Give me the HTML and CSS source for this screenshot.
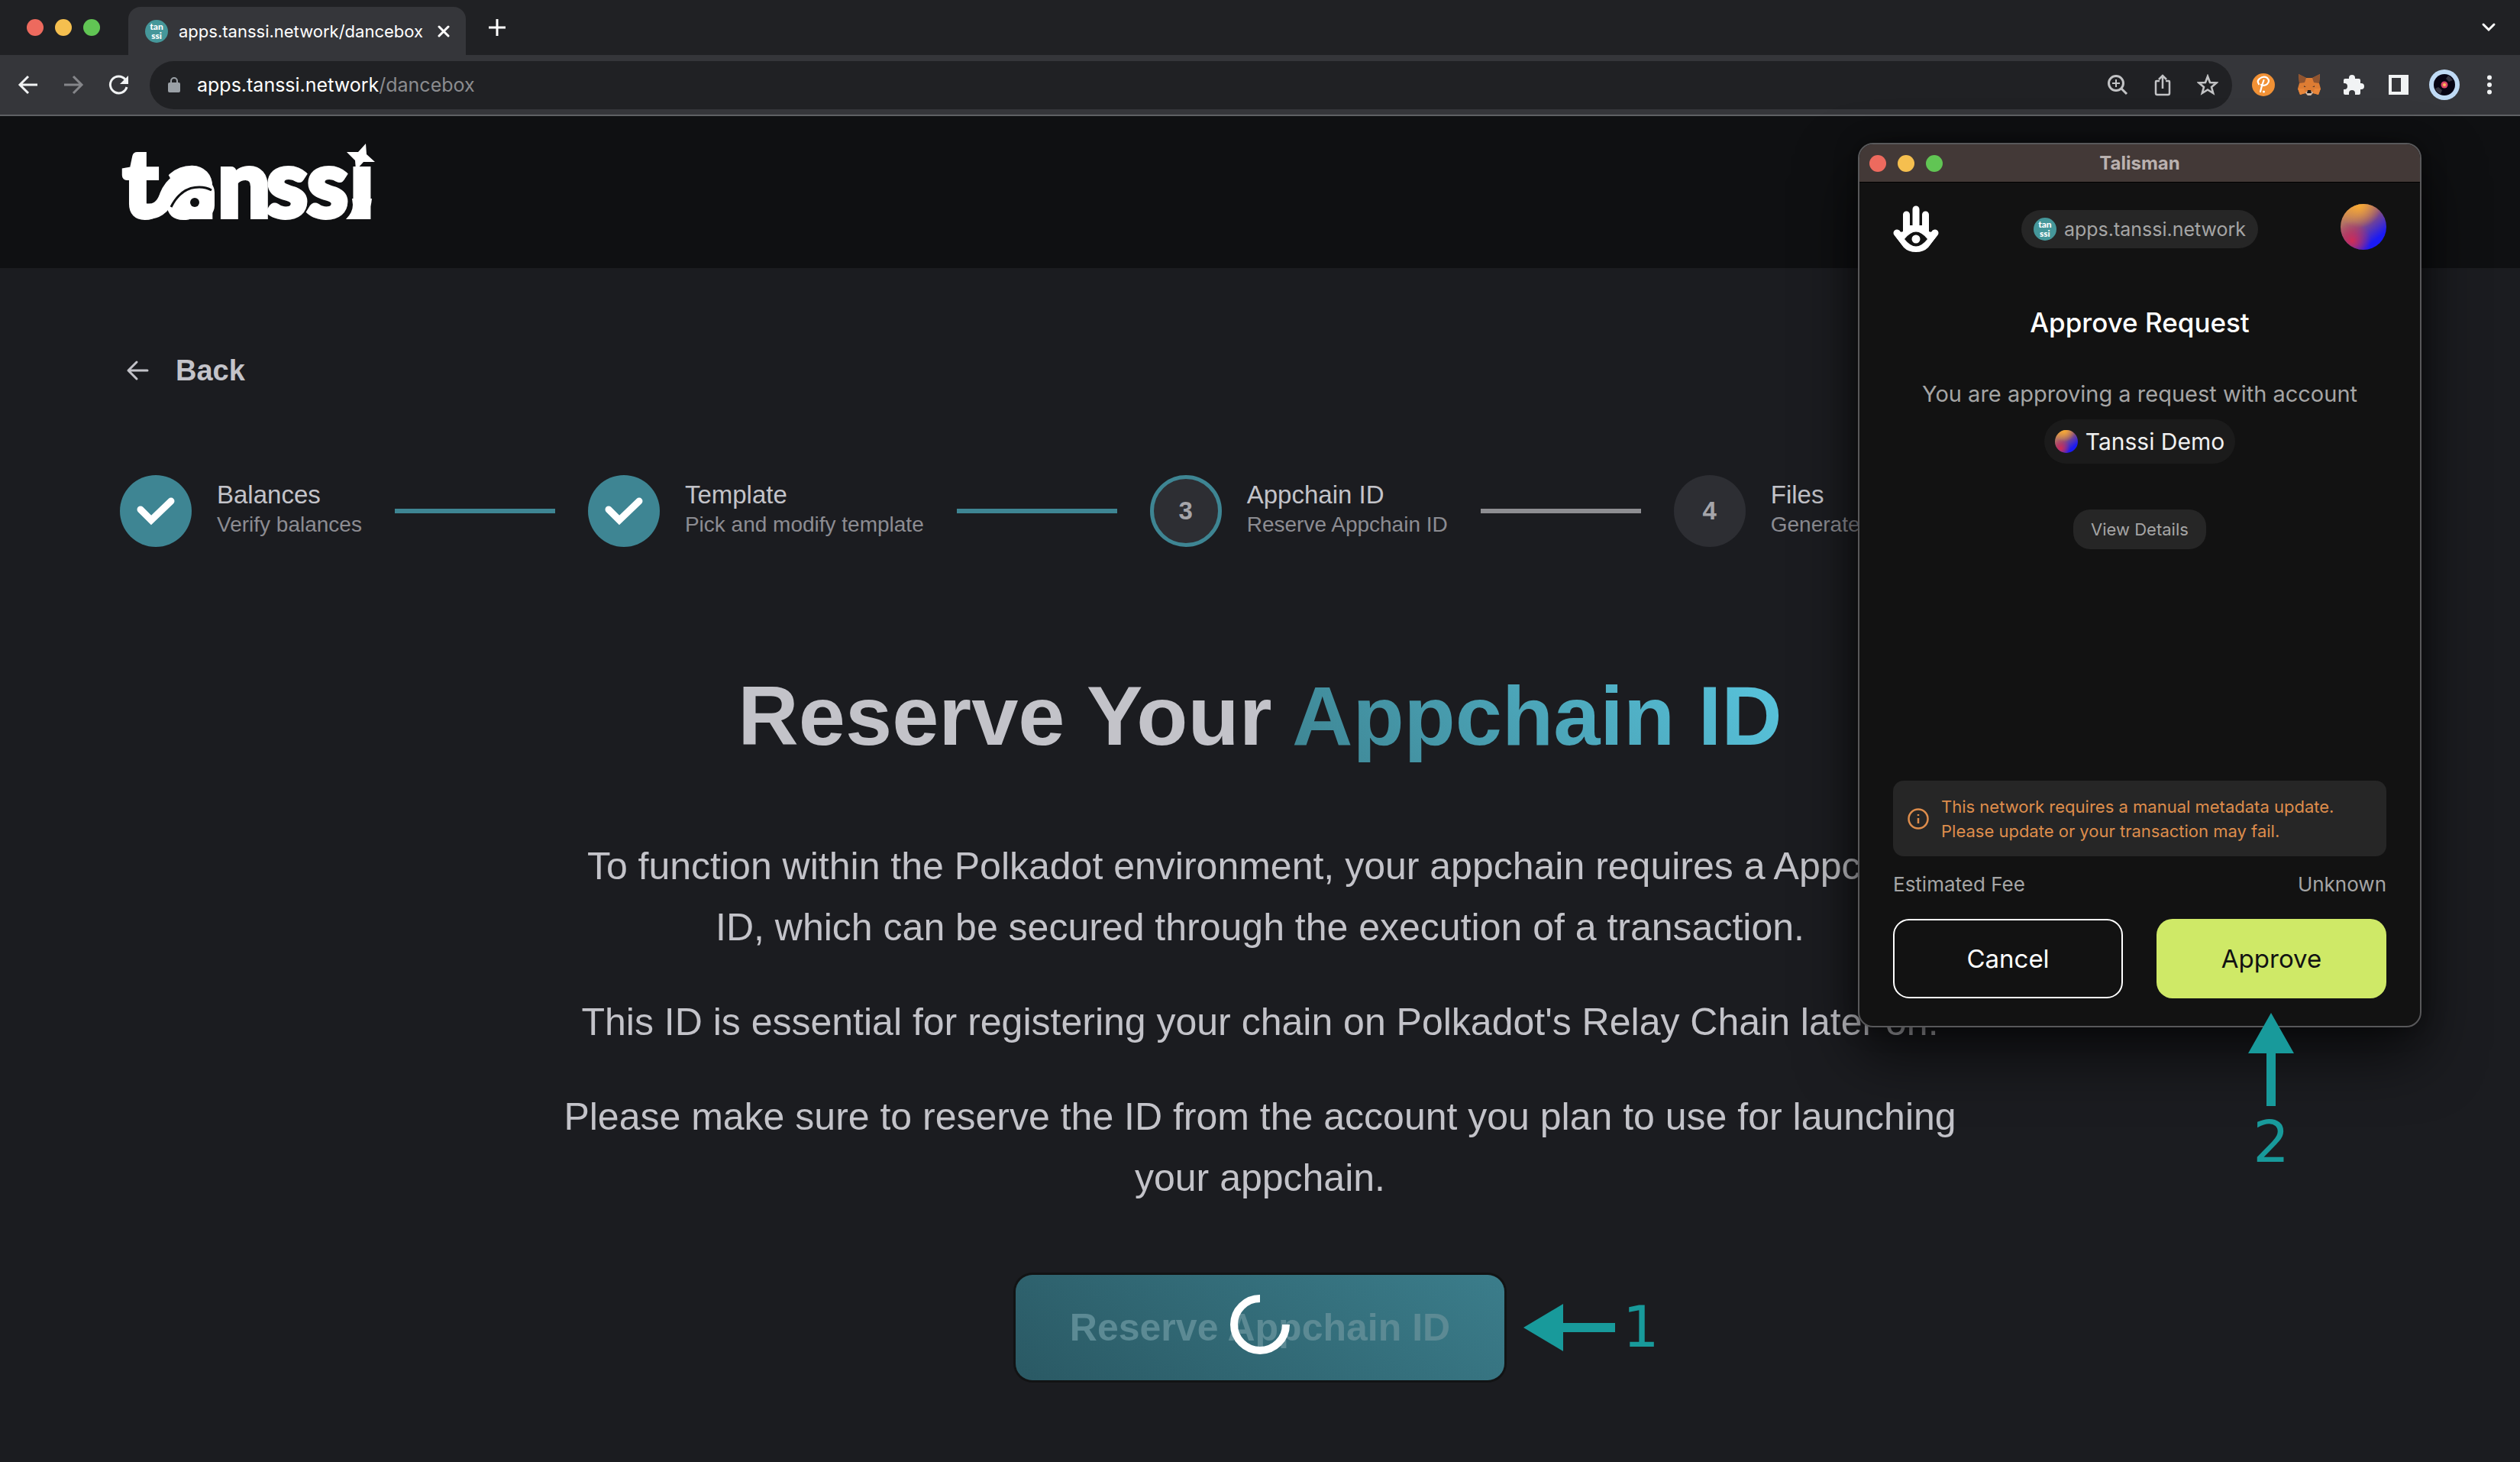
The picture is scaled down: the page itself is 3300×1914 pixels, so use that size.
FILE: index.html
```html
<!DOCTYPE html>
<html lang="en">
<head>
<meta charset="utf-8">
<title>apps.tanssi.network/dancebox</title>
<link rel="stylesheet" href="styles.css">
</head>
<body>
<svg class="defs" aria-hidden="true">
  <defs>
    <linearGradient id="orb-base" x1="0.1" y1="0" x2=".9" y2="1">
      <stop offset="0" stop-color="#e09a4a"/><stop offset=".45" stop-color="#8a4f7c"/><stop offset=".8" stop-color="#1a1af5"/>
    </linearGradient>
    <radialGradient id="orb-top" cx=".4" cy=".02" r=".5"><stop offset="0" stop-color="#f9ab33"/><stop offset="1" stop-color="#f9ab33" stop-opacity="0"/></radialGradient>
    <radialGradient id="orb-red" cx=".25" cy=".8" r=".42"><stop offset="0" stop-color="#cf2c56"/><stop offset="1" stop-color="#cf2c56" stop-opacity="0"/></radialGradient>
    <symbol id="orb" viewBox="0 0 60 60">
      <circle cx="30" cy="30" r="30" fill="url(#orb-base)"/><circle cx="30" cy="30" r="30" fill="url(#orb-top)"/><circle cx="30" cy="30" r="30" fill="url(#orb-red)"/>
    </symbol>
    <symbol id="check" viewBox="0 0 94 94"><path d="M27 45 41 59 67 34" fill="none" stroke="#fff" stroke-width="9" stroke-linecap="round" stroke-linejoin="miter"/></symbol>
  </defs>
</svg>

<header class="browser">
  <div class="tabs">
    <div class="lights"><i class="red"></i><i class="amber"></i><i class="green"></i></div>
    <div class="tab">
      <span class="favicon"><b>tan</b><b>ssi</b></span>
      <span class="tab-title">apps.tanssi.network/dancebox</span>
      <button class="bare" aria-label="Close tab"><svg width="16" height="16" viewBox="0 0 16 16"><path d="M2 2 14 14M14 2 2 14" stroke="#fff" stroke-width="3" stroke-linecap="round"/></svg></button>
    </div>
    <button class="bare new-tab" aria-label="New tab"><svg width="24" height="24" viewBox="0 0 24 24"><path d="M12 1V23M1 12H23" stroke="#fff" stroke-width="3"/></svg></button>
    <button class="bare tab-list" aria-label="Search tabs"><svg width="20" height="14" viewBox="0 0 20 14"><path d="M3 3 10 10 17 3" fill="none" stroke="#fff" stroke-width="3" stroke-linecap="round"/></svg></button>
  </div>
  <div class="toolbar">
    <div class="nav">
      <button class="bare" aria-label="Back"><svg width="28" height="28" viewBox="0 0 28 28"><path d="M26 14H4M14 3 3 14 14 25" fill="none" stroke="#f1f3f4" stroke-width="3"/></svg></button>
      <button class="bare" aria-label="Forward"><svg width="28" height="28" viewBox="0 0 28 28"><path d="M2 14H24M14 3 25 14 14 25" fill="none" stroke="#85868a" stroke-width="3"/></svg></button>
      <button class="bare" aria-label="Reload"><svg width="28" height="28" viewBox="0 0 28 28"><path d="M23 7A11 11 0 1 0 25 17" fill="none" stroke="#f1f3f4" stroke-width="3"/><path d="M27 2V13H16Z" fill="#f1f3f4"/></svg></button>
    </div>
    <div class="address">
      <svg width="16" height="22" viewBox="0 0 16 22"><path d="M4 9V6a4 4 0 0 1 8 0V9" fill="none" stroke="#9aa0a6" stroke-width="2"/><rect width="16" height="13" y="8" rx="2" fill="#9aa0a6"/></svg>
      <span class="url">apps.tanssi.network<span>/dancebox</span></span>
      <svg width="28" height="28" viewBox="0 0 28 28" fill="none" stroke="#c2c3c5" stroke-width="3"><circle cx="12" cy="12" r="9.500"/><path d="M19 19 26 26"/><path d="M12 7V17M7 12H17" stroke-width="2"/></svg>
      <svg width="28" height="30" viewBox="0 0 28 30" fill="none" stroke="#c2c3c5" stroke-width="2.500"><path d="M10 10H6Q5 10 5 11V26Q5 28 7 28H21Q23 28 23 26V11Q23 10 22 10H18M14 20V3M9 8 14 3 19 8"/></svg>
      <svg width="28" height="28" viewBox="0 0 28 28"><path d="M14 3 17 11 25.500 11.500 19 17 21.200 25 14 20.500 6.800 25 9 17 2.500 11.500 11 11Z" fill="none" stroke="#c2c3c5" stroke-width="2.600"/></svg>
    </div>
    <div class="extensions">
      <svg width="30" height="30" viewBox="0 0 30 30"><circle cx="15" cy="15" r="15" fill="#f19135"/><path d="M9 14Q6 10 10 7 15 3 20 6 24 10 20 14 17 17 12 15M15.500 9Q13 15 11 24" fill="none" stroke="#fff" stroke-width="2.200" stroke-linecap="round"/><circle cx="15.500" cy="24" r="1.500" fill="#fff"/></svg>
      <svg width="30" height="30" viewBox="0 0 30 30"><path d="M1 1 11 6H19L29 1 28 13 30 20 27 28 20 26 17 29H13L10 26 3 28 0 20 2 13Z" fill="#dd7c33"/><path d="M1 1 11 6 9 12 2 13ZM29 1 19 6 21 12 28 13Z" fill="#8f5430"/><path d="M0 20H8L10 26 3 28ZM30 20H22L20 26 27 28Z" fill="#e8863a"/><path d="M8 16 11 18 8 18ZM22 16 19 18 22 18Z" fill="#5b3d2c"/><path d="M10 25 13 23H17L20 25 17 29H13Z" fill="#cdbeb2"/><path d="M13 22H17L18 26H12Z" fill="#1c1a1c"/></svg>
      <svg width="28" height="28" viewBox="0 0 28 28"><path d="M2 6H7V5a4 4 0 0 1 8 0V6H20Q22 6 22 8V12H23a4 4 0 0 1 0 8H22V25Q22 27 20 27H15V25a4 4 0 0 0-8 0V27H2Q0 27 0 25V20H1a4 4 0 0 0 0-8H0V8Q0 6 2 6Z" fill="#f1f3f4"/></svg>
      <svg width="28" height="28" viewBox="0 0 28 28"><path fill-rule="evenodd" d="M1 1H27V27H1ZM5 5V23H17V5Z" fill="#f1f3f4"/></svg>
      <svg width="40" height="40" viewBox="0 0 40 40"><circle cx="20" cy="20" r="20" fill="#bfdaf5"/><circle cx="20" cy="20" r="14" fill="#060414"/><path d="M25 8A13 13 0 0 1 31 14L26 16 22 12ZM8 25A13 13 0 0 0 15 32L17 27 12 23Z" fill="#34333f"/><circle cx="20" cy="20" r="4.500" fill="#dc4468"/><circle cx="20" cy="20" r="2" fill="#f9bf55"/></svg>
      <svg width="8" height="28" viewBox="0 0 8 28" fill="#f1f3f4"><circle cx="4" cy="4.500" r="3"/><circle cx="4" cy="14" r="3"/><circle cx="4" cy="23.500" r="3"/></svg>
    </div>
  </div>
</header>

<div class="site-header">
  <svg class="logo" width="340" height="114" viewBox="0 0 340 114" role="img" aria-label="tanssi">
    <text x="4 62 128 192 245 301" y="96">tanssı</text>
    <rect x="67" y="46" width="57" height="53" rx="18" fill="#fff"/>
    <path d="M32 88Q54 92 62 68 72 43 104 43" fill="none" stroke="#fff" stroke-width="20"/>
    <path d="M67 83Q80 57 104 57 113 57 120 61" fill="none" stroke="#0f1012" stroke-width="3"/>
    <circle cx="98" cy="77" r="6" fill="#0f1012"/>
    <path d="M304 72H330Q328 99 304 99H296Q305 90 305 80Z" fill="#fff"/>
    <path d="M322 0 323 14 334 24 319 24 309 35 308 22 297 11 312 11Z" fill="#fff"/>
  </svg>
</div>

<main class="page">
  <a class="back" href="#"><svg width="30" height="28" viewBox="0 0 30 28"><path d="M28 14H3M14 3 3 14 14 25" fill="none" stroke="#c3c3c9" stroke-width="3" stroke-linecap="round" stroke-linejoin="round"/></svg>Back</a>

  <ol class="steps">
    <li class="done"><span class="disc"><svg width="94" height="94"><use href="#check"/></svg></span><span class="label">Balances<small>Verify balances</small></span></li>
    <li class="done"><span class="disc"><svg width="94" height="94"><use href="#check"/></svg></span><span class="label">Template<small>Pick and modify template</small></span></li>
    <li class="current"><span class="disc">3</span><span class="label">Appchain ID<small>Reserve Appchain ID</small></span></li>
    <li><span class="disc">4</span><span class="label">Files<small>Generate files</small></span></li>
  </ol>

  <section class="reserve">
    <h1>Reserve Your <em>Appchain ID</em></h1>
    <p>To function within the Polkadot environment, your appchain requires a Appchain ID, which can be secured through the execution of a transaction.</p>
    <p>This ID is essential for registering your chain on Polkadot's Relay Chain later on.</p>
    <p>Please make sure to reserve the ID from the account you plan to use for launching your appchain.</p>
    <div class="action">
      <button class="submit"><span>Reserve Appchain ID</span><svg class="spinner" width="78" height="78" viewBox="0 0 78 78"><path d="M39 5A34 34 0 1 0 73 39" fill="none" stroke="#fff" stroke-width="10"/></svg></button>
      <div class="mark mark-one"><svg width="120" height="62" viewBox="0 0 120 62"><path d="M0 31 52 0V25H120V37H52V62Z" fill="#189a9b"/></svg>1</div>
    </div>
  </section>
</main>

<aside class="wallet">
  <div class="titlebar"><div class="lights"><i class="red"></i><i class="amber"></i><i class="green"></i></div><strong>Talisman</strong></div>
  <div class="wallet-body">
    <div class="wallet-top">
      <svg width="60" height="62" viewBox="0 0 60 62"><g stroke="#fff" stroke-width="9" stroke-linecap="round"><path d="M17.500 12V36M30 5V34M42.500 12V36"/><path d="M5 36 17 51M55 36 43 51"/></g><path d="M13 26H47V34Q51 36 52 32L58 39 46 55Q40 61 30 61 20 61 14 55L2 39 8 32Q9 36 13 34Z" fill="#fff"/><path d="M15 44Q30 25 45 44 30 63 15 44Z" fill="#121212"/><circle cx="30" cy="44" r="5.500" fill="#fff"/></svg>
      <span class="site"><span class="favicon"><b>tan</b><b>ssi</b></span>apps.tanssi.network</span>
      <svg class="avatar" width="60" height="60"><use href="#orb"/></svg>
    </div>
    <h2>Approve Request</h2>
    <p class="lead">You are approving a request with account</p>
    <span class="account"><svg width="30" height="30"><use href="#orb"/></svg>Tanssi Demo</span>
    <button class="details">View Details</button>
    <div class="notice"><svg width="28" height="28" viewBox="0 0 28 28" fill="none" stroke="#de8d4c" stroke-width="2.500"><circle cx="14" cy="14" r="12.500"/><path d="M14 13V20M14 8V10"/></svg><span>This network requires a manual metadata update.<br>Please update or your transaction may fail.</span></div>
    <div class="fee"><span>Estimated Fee</span><span>Unknown</span></div>
    <div class="choices"><button class="cancel">Cancel</button><button class="approve">Approve</button></div>
  </div>
  <div class="mark mark-two"><svg width="62" height="122" viewBox="0 0 62 122"><path d="M31 0 61 53H37V122H25V53H1Z" fill="#189a9b"/></svg>2</div>
</aside>
</body>
</html>
```
FILE: styles.css
```css
* { box-sizing: border-box; }
body {
  margin: 0;
  min-height: 100vh;
  position: relative;
  overflow-x: hidden;
  background: #1b1c20;
  color: #c3c3c9;
  font-family: "Liberation Sans", Arial, sans-serif;
}
button { font: inherit; cursor: pointer; }
svg { display: block; flex: none; }
.defs { position: absolute; width: 0; height: 0; }
.bare { padding: 0; border: 0; background: none; }

/* Browser chrome */
.browser { font-family: Inter, sans-serif; color: #fff; background: #202124; border-bottom: 2px solid #5f6164; }
.tabs { display: flex; align-items: center; height: 72px; padding: 0 31px 0 35px; }
.lights { display: flex; gap: 15px; }
.lights i { width: 22px; height: 22px; border-radius: 50%; }
.red { background: #ed6a5e; }
.amber { background: #f5bf4f; }
.green { background: #61c554; }
.tab {
  display: flex; align-items: center; align-self: flex-end;
  width: 442px; height: 63px; margin-left: 37px; padding: 0 21px 0 22px;
  background: #35363a; border-radius: 16px 16px 0 0;
  font-size: 22px; white-space: nowrap;
}
.tab-title { flex: 1; margin-left: 14px; }
.favicon {
  display: flex; flex-direction: column; justify-content: center; flex: none;
  width: 30px; height: 30px; border-radius: 50%;
  background: #45979a; color: #fff; text-align: center;
  font: 900 12px/12px Lato, sans-serif;
}
.favicon b { font-weight: 900; }
.new-tab { margin-left: 29px; }
.tab-list { margin-left: auto; }
.toolbar { display: flex; align-items: center; height: 78px; padding: 0 36px 0 23px; background: #35363a; }
.nav { display: flex; gap: 31px; width: 173px; }
.address {
  display: flex; align-items: center; gap: 31px; flex: 1;
  height: 63px; padding: 0 18px 0 24px; border-radius: 32px; background: #202124;
}
.url { flex: 1; margin-left: -9px; font-size: 25px; }
.url span { color: #8b8c8f; }
.extensions { display: flex; align-items: center; gap: 30px; margin-left: 26px; }
.extensions svg:last-child { margin-left: 5px; }
.extensions svg:nth-last-child(2) { margin-left: -4px; }

/* Site */
.site-header { display: flex; align-items: center; height: 199px; padding: 0 157px 14px; background: #0f1012; }
.logo { overflow: visible; }
.logo text { font: 900 122px Lato, sans-serif; fill: #fff; stroke: #fff; stroke-width: 6px; }
.page { padding: 110px 157px; }
.back { display: inline-flex; align-items: center; gap: 35px; padding-left: 8px; color: inherit; font-size: 38px; line-height: 48px; font-weight: 700; text-decoration: none; }
.steps { display: flex; margin: 113px 0 0; padding: 0; list-style: none; }
.steps li { display: flex; align-items: center; }
.steps li + li::before { content: ""; width: 210px; height: 6px; margin: 0 43px; background: #3e8593; }
.steps .current + li::before { background: #8e8e92; }
.disc { display: grid; place-items: center; width: 94px; height: 94px; border-radius: 50%; background: #2d2e33; color: #a5a5aa; font-size: 33px; font-weight: 700; }
.done .disc { background: #3e8593; }
.current .disc { border: 5px solid #3e8593; }
.label { margin-left: 33px; padding-bottom: 5px; font-size: 33px; line-height: 40px; white-space: nowrap; }
.label small { display: block; color: #8c8c92; font-size: 28px; line-height: 38px; }
.reserve { width: 1832px; max-width: 100%; margin: 155px auto 0; text-align: center; }
h1 { margin: 0 0 91px; font-size: 110px; line-height: 132px; }
h1 em { font-style: normal; color: transparent; background: linear-gradient(50deg, #3e8593, #59c5de); background-clip: text; -webkit-background-clip: text; }
.reserve p { margin: 0 0 44px; font-size: 50px; line-height: 80px; }
.action { display: grid; justify-content: center; margin-top: 87px; position: relative; }
.submit {
  display: grid; place-items: center; width: 640px; height: 138px; padding: 0; border: 0; border-radius: 22px;
  background: linear-gradient(35deg, #2a5964, #3b7d8b); box-shadow: 0 0 0 3px #121314;
  color: #5c8a94; font-size: 50px; font-weight: 700;
}
.submit > * { grid-area: 1 / 1; }
.spinner { margin-bottom: 8px; }
.mark { position: absolute; display: flex; align-items: center; color: #189a9b; font: 75px/75px "DejaVu Sans", sans-serif; }
.mark-one { left: 1261px; top: 31px; gap: 10px; }

/* Wallet window */
.wallet {
  position: absolute; top: 187px; right: 129px; width: 738px; height: 1158px;
  display: flex; flex-direction: column;
  background: #121212; border: 2px solid #58585a; border-radius: 20px;
  box-shadow: 0 36px 80px rgba(0, 0, 0, .65), 0 0 30px rgba(0, 0, 0, .4);
  color: #a5a5a5; font-family: Inter, sans-serif;
}
.titlebar { display: grid; grid-template-columns: 1fr auto 1fr; align-items: center; height: 50px; padding: 0 13px; background: #433937; border-radius: 18px 18px 0 0; border-bottom: 1px solid #000; color: #bab1af; font-size: 24px; }
.wallet-body { display: flex; flex-direction: column; align-items: center; flex: 1; padding: 28px 44px 36px; }
.wallet-top { display: flex; align-items: center; justify-content: space-between; align-self: stretch; }
.avatar { margin-bottom: 6px; }
.site { display: flex; align-items: center; gap: 10px; height: 50px; padding: 0 16px; border-radius: 25px; background: #262626; font-size: 25px; }
h2 { margin: 67px 0 0; color: #fff; font-size: 35px; line-height: 44px; font-weight: 500; }
.lead { margin: 52px 0 0; font-size: 29px; line-height: 40px; white-space: nowrap; }
.account { display: flex; align-items: center; gap: 10px; height: 58px; margin-top: 13px; padding: 0 14px; border-radius: 29px; background: #1b1b1b; color: #f0f0f0; font-size: 30px; }
.details { height: 52px; margin-top: 60px; padding: 0 23px; border: 0; border-radius: 22px; background: #262626; color: #a5a5a5; font-size: 22px; }
.notice { display: flex; align-items: center; gap: 16px; align-self: stretch; height: 99px; margin-top: auto; padding: 0 19px; border-radius: 14px; background: #262626; color: #de8d4c; font-size: 22px; line-height: 32px; white-space: nowrap; }
.fee { display: flex; justify-content: space-between; align-self: stretch; margin: 20px 0 28px; font-size: 26px; line-height: 34px; }
.choices { display: grid; grid-template-columns: 1fr 1fr; gap: 44px; align-self: stretch; }
.choices button { height: 104px; border-radius: 21px; font-size: 33px; }
.cancel { border: 2px solid #fff; background: none; color: #fff; }
.approve { border: 0; background: #cfe967; color: #121212; }
.mark-two { left: 508px; top: 1137px; flex-direction: column; gap: 10px; }
```
